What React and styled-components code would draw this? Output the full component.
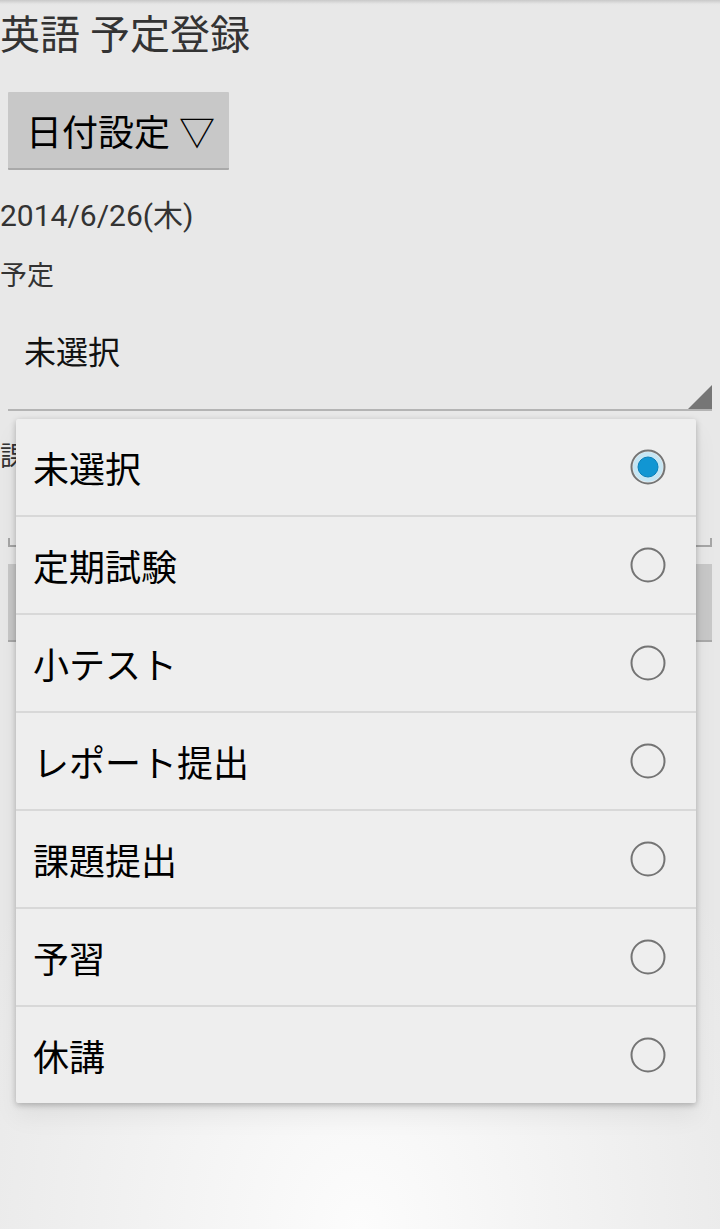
import React from "react";
import styled, { createGlobalStyle } from "styled-components";

const GlobalStyle = createGlobalStyle`
  html, body {
    margin: 0;
    padding: 0;
    height: 100%;
  }
  body {
    font-family: Roboto, "Noto Sans CJK JP", sans-serif;
    background: #e8e8e8;
  }
  #root {
    min-height: 100%;
  }
`;

const options = ["未選択", "定期試験", "小テスト", "レポート提出", "課題提出", "予習", "休講"];

function Radio({ checked }) {
  return (
    <svg width="38" height="38" viewBox="0 0 38 38">
      {checked && <circle cx="19" cy="19" r="15" fill="#c6e6f4" />}
      <circle cx="19" cy="19" r="16.5" fill="none" stroke="#747474" strokeWidth="2" />
      {checked && <circle cx="19" cy="19" r="10" fill="#1196d3" stroke="#0a7fb8" strokeWidth="1" />}
    </svg>
  );
}

export default function App() {
  return (
    <Page>
      <GlobalStyle />
      <Title>英語 予定登録</Title>
      <DateButton>日付設定 ▽</DateButton>
      <DateText>2014/6/26(木)</DateText>
      <Label $top={22}>予定</Label>
      <Spinner>未選択</Spinner>
      <Label $top={28}>課題</Label>
      <EditText />
      <WideButton>登録</WideButton>

      <Popup>
        {options.map((o, i) => (
          <Row key={o}>
            <RowText>{o}</RowText>
            <Radio checked={i === 0} />
          </Row>
        ))}
      </Popup>
    </Page>
  );
}

const Page = styled.div`
  position: relative;
  min-height: 1229px;
  display: flex;
  flex-direction: column;
  align-items: flex-start;
  background:
    linear-gradient(to bottom, #c9c9c9 0px, #e6e6e6 4px, rgba(230, 230, 230, 0) 6px),
    radial-gradient(ellipse 60% 45% at 50% 100%, #fcfcfc 0%, #f3f3f3 45%, rgba(232, 232, 232, 0) 100%),
    #e8e8e8;
`;

const Title = styled.h1`
  margin: 8px 0 0 0;
  height: 56px;
  font-size: 40px;
  line-height: 56px;
  font-weight: 400;
  color: #333;
`;

const DateButton = styled.button`
  margin: 28px 0 0 8px;
  width: 221px;
  height: 78px;
  padding: 0 0 0 18px;
  display: flex;
  align-items: center;
  font-family: Roboto, "Noto Sans CJK JP", sans-serif;
  font-size: 36px;
  color: #000;
  background: #c8c8c8;
  border: none;
  border-bottom: 2px solid #a9a9a9;
  border-radius: 1px;
`;

const DateText = styled.div`
  margin-top: 26px;
  font-size: 30px;
  line-height: 40px;
  color: #333;
`;

const Label = styled.div`
  margin-top: ${(p) => p.$top}px;
  font-size: 27px;
  line-height: 36px;
  color: #333;
`;

const Spinner = styled.div`
  position: relative;
  box-sizing: border-box;
  margin: 0 8px;
  align-self: stretch;
  height: 117px;
  padding: 36px 0 0 16px;
  font-size: 32px;
  line-height: 46px;
  color: #111;
  border-bottom: 2px solid #b4b4b4;

  &::after {
    content: "";
    position: absolute;
    right: 0;
    bottom: 0;
    width: 0;
    height: 0;
    border-left: 24px solid transparent;
    border-bottom: 24px solid #767676;
  }
`;

const EditText = styled.div`
  box-sizing: border-box;
  margin: 63px 8px 0 8px;
  align-self: stretch;
  height: 9px;
  border: 2px solid #a6a6a6;
  border-top: none;
`;

const WideButton = styled.button`
  margin: 17px 8px 0 8px;
  align-self: stretch;
  height: 78px;
  font-size: 34px;
  color: #000;
  background: #c8c8c8;
  border: none;
  border-bottom: 2px solid #a9a9a9;
`;

const Popup = styled.div`
  position: absolute;
  top: 419px;
  left: 16px;
  width: 680px;
  background: #eeeeee;
  border-radius: 2px;
  box-shadow: 0 2px 6px rgba(0, 0, 0, 0.25), 0 14px 24px rgba(0, 0, 0, 0.06);
`;

const Row = styled.div`
  box-sizing: border-box;
  height: 98px;
  display: flex;
  align-items: center;
  justify-content: space-between;
  padding: 0 29px 0 17px;
  border-bottom: 2px solid #d8d8d8;

  &:last-child {
    height: 96px;
    border-bottom: none;
  }
`;

const RowText = styled.span`
  font-size: 36px;
  color: #000;
`;
